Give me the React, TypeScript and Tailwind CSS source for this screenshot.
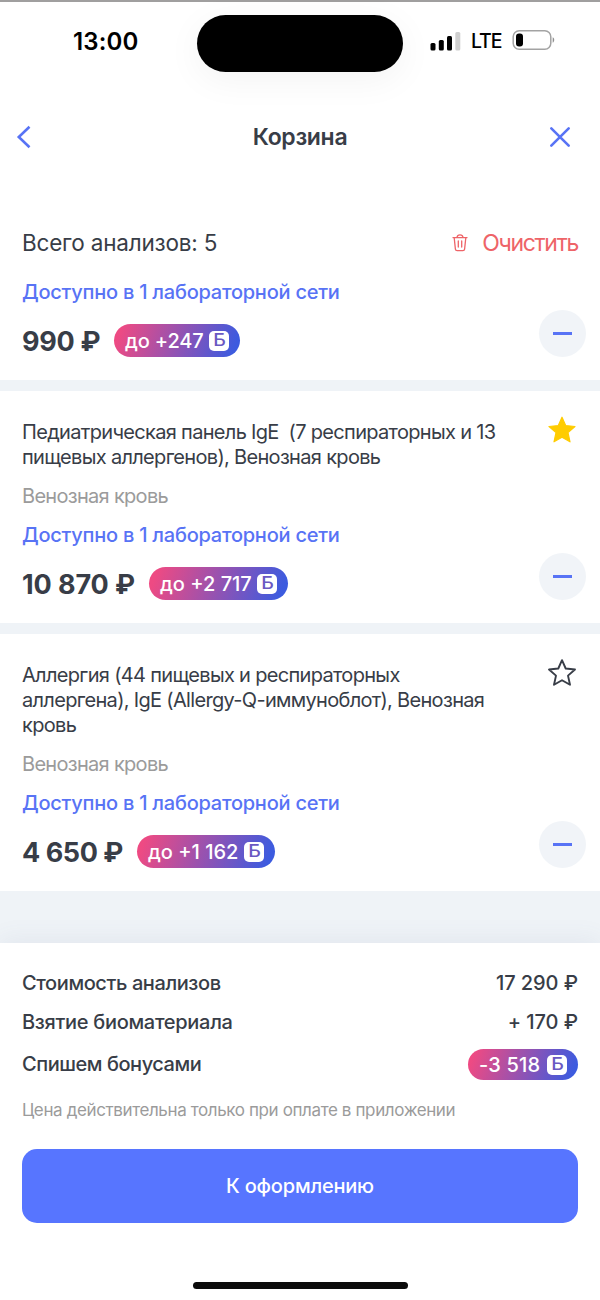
import React from 'react';

interface CartItem {
  id: number;
  title?: string[];
  material?: string;
  price: string;
  priceClass: string;
  bonus: string;
  bonusClass: string;
  favorite?: boolean;
}

const items: CartItem[] = [
  {
    id: 1,
    price: '990 ₽',
    priceClass: 'w-[92px] tracking-[-0.3px]',
    bonus: 'до +247',
    bonusClass: 'w-[126px] tracking-[-0.15px]',
  },
  {
    id: 2,
    title: ['Педиатрическая панель IgE  (7 респираторных и 13', 'пищевых аллергенов), Венозная кровь'],
    material: 'Венозная кровь',
    price: '10 870 ₽',
    priceClass: 'w-[127px] tracking-[-0.1px]',
    bonus: 'до +2 717',
    bonusClass: 'w-[139px] tracking-normal',
    favorite: true,
  },
  {
    id: 3,
    title: [
      'Аллергия (44 пищевых и респираторных',
      'аллергена), IgE (Allergy-Q-иммуноблот), Венозная',
      'кровь',
    ],
    material: 'Венозная кровь',
    price: '4 650 ₽',
    priceClass: 'w-[115px] tracking-[-0.45px]',
    bonus: 'до +1 162',
    bonusClass: 'w-[138px] tracking-normal',
    favorite: false,
  },
];

const StatusBar: React.FC = () => (
  <div className="flex h-[80px] items-start border-t-2 border-[#a09f9f] text-black">
    <div className="flex h-[80px] w-[197px] items-center pl-[73px]">
      <span className="text-[24px] font-semibold leading-none tracking-[0.15px]">13:00</span>
    </div>
    <div className="mt-[12.500px] h-[57.500px] w-[206px] shrink-0 rounded-full bg-black shadow-[0_8px_36px_rgba(0,0,0,0.05)]" />
    <div className="flex h-[78px] flex-1 items-center pl-[27px]">
      <svg width="31" height="20" viewBox="0 0 31 20" className="mb-px">
        <rect x="0.500" y="12" width="5" height="7.500" rx="1.500" />
        <rect x="8.800" y="9" width="5" height="10.500" rx="1.500" />
        <rect x="17" y="5" width="5" height="14.500" rx="1.500" />
        <rect x="25.300" y="1" width="5" height="18.500" rx="1.500" fill="#cfcfcf" />
      </svg>
      <span className="ml-[10px] mt-0.5 w-[41px] text-[19.500px] font-medium leading-none tracking-[-1.1px]">LTE</span>
      <svg width="44" height="22" viewBox="0 0 44 22" className="mb-0.5">
        <rect x="1.200" y="1.700" width="37.600" height="18.600" rx="6" fill="none" stroke="#a3a3a3" strokeWidth="1.500" />
        <rect x="4" y="4.500" width="7" height="13" rx="3" />
        <path d="M40.700 8.300c2 .8 2 4.600 0 5.400z" fill="#8f8f8f" />
      </svg>
    </div>
  </div>
);

const Header: React.FC = () => (
  <div className="flex h-[114px] items-center justify-between pl-4 pr-[29px]">
    <svg width="16" height="24" viewBox="0 0 16 24" fill="none" stroke="#5873f5" strokeWidth="2.600">
      <path d="M13.500 1.800 2.800 12l10.700 10.200" />
    </svg>
    <h1 className="pl-[19px] text-[23px] font-semibold leading-none tracking-[-0.3px]">Корзина</h1>
    <svg width="22" height="22" viewBox="0 0 22 22" fill="none" stroke="#5873f5" strokeWidth="2.600" strokeLinecap="round">
      <path d="m2.300 2.300 17.400 17.400M19.700 2.300 2.300 19.700" />
    </svg>
  </div>
);

const TrashIcon: React.FC = () => (
  <svg width="16" height="18" viewBox="0 0 16 18" fill="none" stroke="#ee6468" strokeWidth="1.300" strokeLinecap="round" strokeLinejoin="round">
    <path d="M1 3.600h14M5 3.400C5.200 1.700 6.200.9 8 .9s2.800.8 3 2.500M2.200 3.800l1.200 11.300c.1 1 .7 1.500 1.700 1.500h5.800c1 0 1.600-.5 1.700-1.500l1.200-11.300M6.300 7v6M9.700 7v6" />
  </svg>
);

const StarIcon: React.FC<{ filled: boolean }> = ({ filled }) => (
  <svg width="30" height="29" viewBox="0 0 30 29" className={filled ? 'text-[#ffcc00]' : 'text-[#383d47]'}>
    <path
      d="M15 2.200 18.700 10.500 28 11.500 21 17.600 23 26.800 15 22.200 7 26.800 9 17.600 2 11.500 11.300 10.500Z"
      fill={filled ? 'currentColor' : 'none'}
      stroke="currentColor"
      strokeWidth={filled ? 1.2 : 1.9}
      strokeLinejoin="round"
    />
  </svg>
);

const BonusPill: React.FC<{ label: string; className: string }> = ({ label, className }) => (
  <div
    className={`flex shrink-0 items-center justify-between rounded-full bg-linear-[110deg,#ee4a83_6%,#3c5bdf_94%] px-[11px] text-[20px] font-medium leading-none text-white ${className}`}
  >
    <span className="whitespace-nowrap">{label}</span>
    <span className="flex h-5 w-5 items-center justify-center rounded-[5px] bg-white text-[17px] font-medium tracking-normal text-[#6a58c2]">
      <span className="scale-x-115">Б</span>
    </span>
  </div>
);

const CartCard: React.FC<{ item: CartItem }> = ({ item }) => (
  <div className="flex justify-between bg-white pl-[22px] pr-[14px] pb-[22.500px]">
    <div className={item.title ? 'pt-[29.500px]' : 'pt-2'}>
      {item.title && (
        <div className="mb-[14px] whitespace-pre text-[20px] leading-[25px] tracking-[-0.68px]">
          {item.title.map((line) => (
            <p key={line}>{line}</p>
          ))}
        </div>
      )}
      {item.material && (
        <p className="mb-[14px] text-[20px] leading-[25px] tracking-[-0.7px] text-[#9b9b9b]">{item.material}</p>
      )}
      <p className="text-[20px] font-medium leading-[25px] tracking-[-0.24px] text-[#5873f5]">
        Доступно в 1 лабораторной сети
      </p>
      <div className="mt-[19px] flex h-[33px] items-stretch">
        <span className={`mt-px self-center whitespace-nowrap text-[27px] font-bold leading-none ${item.priceClass}`}>
          {item.price}
        </span>
        <BonusPill label={item.bonus} className={item.bonusClass} />
      </div>
    </div>
    <div className="flex flex-col items-center justify-end">
      {item.favorite !== undefined && (
        <button className="mb-auto mr-0.5 mt-6">
          <StarIcon filled={item.favorite} />
        </button>
      )}
      <button className="flex h-[47px] w-[47px] items-center justify-center rounded-full bg-[#f1f4f8]">
        <span className="h-[3px] w-[19px] bg-[#5873f5]" />
      </button>
    </div>
  </div>
);

const Summary: React.FC = () => (
  <div className="relative flex h-[357px] flex-col bg-white px-[22px] shadow-[0_-4px_22px_rgba(90,100,140,0.08)]">
    <div className="mt-[27px] flex h-[26px] items-center justify-between text-[20px] font-medium tracking-[-0.4px]">
      <span>Стоимость анализов</span>
      <span className="tracking-[-0.05px]">17 290 ₽</span>
    </div>
    <div className="mt-[13px] flex h-[26px] items-center justify-between text-[20px] font-medium tracking-[-0.3px]">
      <span>Взятие биоматериала</span>
      <span className="tracking-[-0.05px]">+ 170 ₽</span>
    </div>
    <div className="mt-[14px] flex h-[31px] items-stretch justify-between text-[20px] font-medium tracking-[-0.45px]">
      <span className="mb-px self-center">Спишем бонусами</span>
      <BonusPill label="-3 518" className="w-[110px] tracking-[0.2px]" />
    </div>
    <p className="mt-[19px] text-[17px] leading-[22px] tracking-[-0.38px] text-[#9b9b9b]">
      Цена действительна только при оплате в приложении
    </p>
    <button className="mt-7 h-[74px] shrink-0 rounded-[15px] bg-[#5775ff] text-[20px] font-medium tracking-[-0.2px] text-white">
      К оформлению
    </button>
    <div className="mx-auto mt-[59px] h-[7px] w-[215px] shrink-0 rounded-full bg-[#0b0b0b]" />
  </div>
);

const App: React.FC = () => (
  <div className="flex h-[1300px] w-[600px] flex-col overflow-hidden bg-white font-['Inter','Liberation_Sans',sans-serif] text-[#383d47]">
    <StatusBar />
    <Header />
    <div className="flex h-[78px] shrink-0 items-center justify-between px-[22px] pt-5">
      <span className="text-[22.500px] tracking-[-0.2px]">Всего анализов: 5</span>
      <button className="flex items-center text-[#ee6468]">
        <TrashIcon />
        <span className="ml-[14px] text-[23px] tracking-[-1.3px]">Очистить</span>
      </button>
    </div>
    <div className="flex flex-1 flex-col gap-[11px] bg-[#eff3f7]">
      {items.map((item) => (
        <CartCard key={item.id} item={item} />
      ))}
    </div>
    <Summary />
  </div>
);

export default App;
